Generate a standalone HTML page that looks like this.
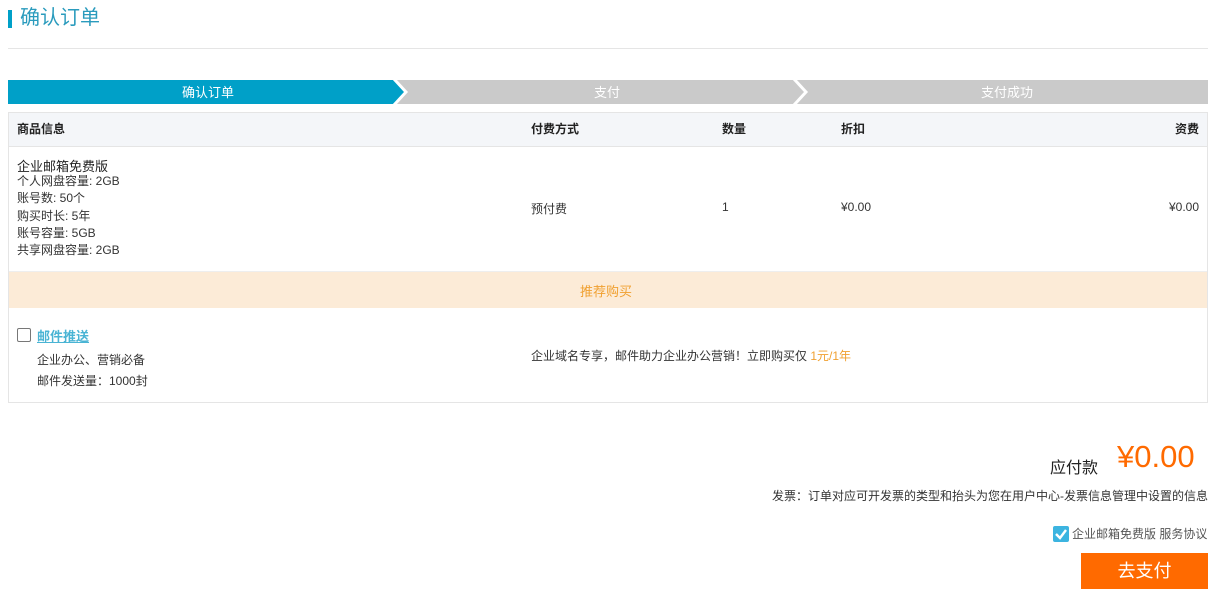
<!DOCTYPE html>
<html><head><meta charset="utf-8"><style>
*{margin:0;padding:0;box-sizing:border-box}
body{width:1219px;height:597px;background:#fff;font-family:"Liberation Sans","Noto Sans CJK SC",sans-serif;color:#333;position:relative;overflow:hidden;font-size:12px}
.abs{position:absolute;white-space:nowrap}
</style></head><body>
<div class="abs" style="left:8px;top:10px;width:4px;height:18px;background:#00a0c8"></div>
<div class="abs" style="left:20px;top:5px;font-size:20px;color:#2a9bbd;line-height:26px">确认订单</div>
<div class="abs" style="left:8px;top:48px;width:1200px;height:1px;background:#e5e5e5"></div>
<svg class="abs" style="left:8px;top:80px" width="1200" height="24">
<rect x="0" y="0" width="1200" height="24" fill="#cacaca"/>
<polygon points="0,0 386,0 398,12 386,24 0,24" fill="#00a0c8"/>
<polyline points="386,-1 398,12 386,25" fill="none" stroke="#fff" stroke-width="3"/>
<polyline points="786,-1 798,12 786,25" fill="none" stroke="#fff" stroke-width="3"/>
<text x="200" y="17" font-size="13" fill="#fff" text-anchor="middle" font-family="Liberation Sans,Noto Sans CJK SC,sans-serif">确认订单</text>
<text x="599" y="17" font-size="13" fill="#fff" text-anchor="middle" font-family="Liberation Sans,Noto Sans CJK SC,sans-serif">支付</text>
<text x="999" y="17" font-size="13" fill="#fff" text-anchor="middle" font-family="Liberation Sans,Noto Sans CJK SC,sans-serif">支付成功</text>
</svg>
<div class="abs" style="left:8px;top:112px;width:1200px;height:291px;border:1px solid #e5e5e5"></div>
<div class="abs" style="left:9px;top:113px;width:1198px;height:34px;background:#f4f6f9;border-bottom:1px solid #e5e5e5"></div>
<div class="abs" style="left:17px;top:120px;font-weight:bold;color:#222">商品信息</div>
<div class="abs" style="left:531px;top:120px;font-weight:bold;color:#222">付费方式</div>
<div class="abs" style="left:722px;top:120px;font-weight:bold;color:#222">数量</div>
<div class="abs" style="left:841px;top:120px;font-weight:bold;color:#222">折扣</div>
<div class="abs" style="right:20px;top:120px;font-weight:bold;color:#222">资费</div>
<div class="abs" style="left:17px;top:159px;font-size:13px;color:#222;line-height:16px">企业邮箱免费版</div>
<div class="abs" style="left:17px;top:173px;line-height:17.3px;color:#333">个人网盘容量: 2GB<br>账号数: 50个<br>购买时长: 5年<br>账号容量: 5GB<br>共享网盘容量: 2GB</div>
<div class="abs" style="left:531px;top:200px">预付费</div>
<div class="abs" style="left:722px;top:200px">1</div>
<div class="abs" style="left:841px;top:200px">¥0.00</div>
<div class="abs" style="right:20px;top:200px">¥0.00</div>
<div class="abs" style="left:9px;top:271px;width:1198px;height:37px;background:#fcebd7;border-top:1px solid #eee"></div>
<div class="abs" style="left:580px;top:281px;color:#f0a030;font-size:13px">推荐购买</div>
<div class="abs" style="left:17px;top:328px;width:14px;height:14px;border:1px solid #777;border-radius:2px"></div>
<div class="abs" style="left:37px;top:326px;font-size:13px;font-weight:bold;color:#4ab4d4;text-decoration:underline">邮件推送</div>
<div class="abs" style="left:37px;top:350px;line-height:21px">企业办公、营销必备<br>邮件发送量：1000封</div>
<div class="abs" style="left:531px;top:347px">企业域名专享，邮件助力企业办公营销！立即购买仅 <span style="color:#f0a030">1元/1年</span></div>
<div class="abs" style="left:1050px;top:454px;font-size:16px;color:#222">应付款</div>
<div class="abs" style="left:1117px;top:439px;font-size:31px;color:#ff6a00">¥0.00</div>
<div class="abs" style="right:11px;top:487px;color:#333">发票：订单对应可开发票的类型和抬头为您在用户中心-发票信息管理中设置的信息</div>
<div class="abs" style="left:1053px;top:526px;width:16px;height:16px;background:#3cb4e0;border-radius:2px"><svg width="16" height="16"><polyline points="3,8 7,12 13,4" fill="none" stroke="#fff" stroke-width="2.4"/></svg></div>
<div class="abs" style="left:1072px;top:525px;color:#555">企业邮箱免费版 服务协议</div>
<div class="abs" style="left:1081px;top:553px;width:127px;height:36px;background:#ff6a00;color:#fff;font-size:18px;text-align:center;line-height:36px">去支付</div>
</body></html>
